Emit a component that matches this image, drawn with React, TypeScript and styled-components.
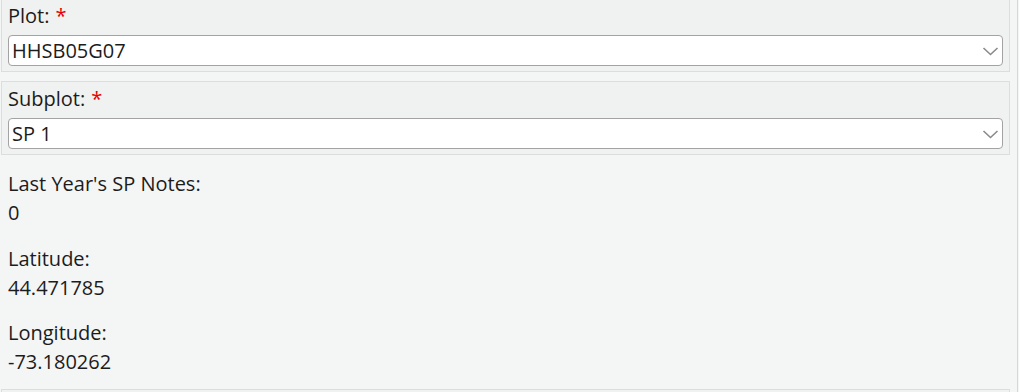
import React from "react";
import styled, { createGlobalStyle } from "styled-components";

const Global = createGlobalStyle`
  html, body { margin: 0; padding: 0; background: #f4f5f5; overflow: hidden; }
  body { font-family: "Open Sans", "Noto Sans", sans-serif; color: #1c1c1c; }
`;

const Frame = styled.div`
  width: 1017px;
  height: 392px;
  border-right: 1px solid #d6d8d8;
  background: #f4f5f5;
  overflow: hidden;
`;

const Scroller = styled.div`
  display: flex;
  flex-direction: column;
  margin-top: -2px;
  padding-left: 1px;
  width: 1009px;
`;

const Panel = styled.div`
  display: flex;
  flex-direction: column;
  border: 1px solid #dcdddd;
  background: #f0f1f1;
  padding: 2px 6px 5px 6px;
  margin-bottom: 9px;
`;

const Label = styled.div`
  font-size: 20px;
  line-height: 30px;
  margin-bottom: 4px;
`;

const Required = styled.span`
  color: #e60000;
  margin-left: 6px;
`;

const SelectBox = styled.div`
  display: flex;
  align-items: center;
  justify-content: space-between;
  height: 29px;
  border: 1px solid #a3a3a3;
  border-radius: 4px;
  background: #ffffff;
  padding: 0 3px 0 3px;
  font-size: 20px;
`;

const Chevron = () => (
  <svg width="18" height="18" viewBox="0 0 18 18" fill="none">
    <path d="M2.5 6 L9.5 12.5 L16.5 6" stroke="#8a8a8a" strokeWidth="1.6" />
  </svg>
);

const ReadOnly = styled.div`
  display: flex;
  flex-direction: column;
  gap: 16.5px;
  padding: 5px 7px 0 7px;
  margin-bottom: 13px;
  font-size: 20px;
  line-height: 29px;
`;

const Field = styled.div`
  display: flex;
  flex-direction: column;
`;

const EmptyPanel = styled(Panel)`
  height: 40px;
`;

const Select = ({ value }: { value: string }) => (
  <SelectBox>
    <span>{value}</span>
    <Chevron />
  </SelectBox>
);

export default function App() {
  return (
    <>
      <Global />
      <Frame>
        <Scroller>
          <Panel>
            <Label>
              Plot:<Required>*</Required>
            </Label>
            <Select value="HHSB05G07" />
          </Panel>
          <Panel>
            <Label>
              Subplot:<Required>*</Required>
            </Label>
            <Select value="SP 1" />
          </Panel>
          <ReadOnly>
            <Field>
              <span>Last Year's SP Notes:</span>
              <span>0</span>
            </Field>
            <Field>
              <span>Latitude:</span>
              <span>44.471785</span>
            </Field>
            <Field>
              <span>Longitude:</span>
              <span>-73.180262</span>
            </Field>
          </ReadOnly>
          <EmptyPanel />
        </Scroller>
      </Frame>
    </>
  );
}
